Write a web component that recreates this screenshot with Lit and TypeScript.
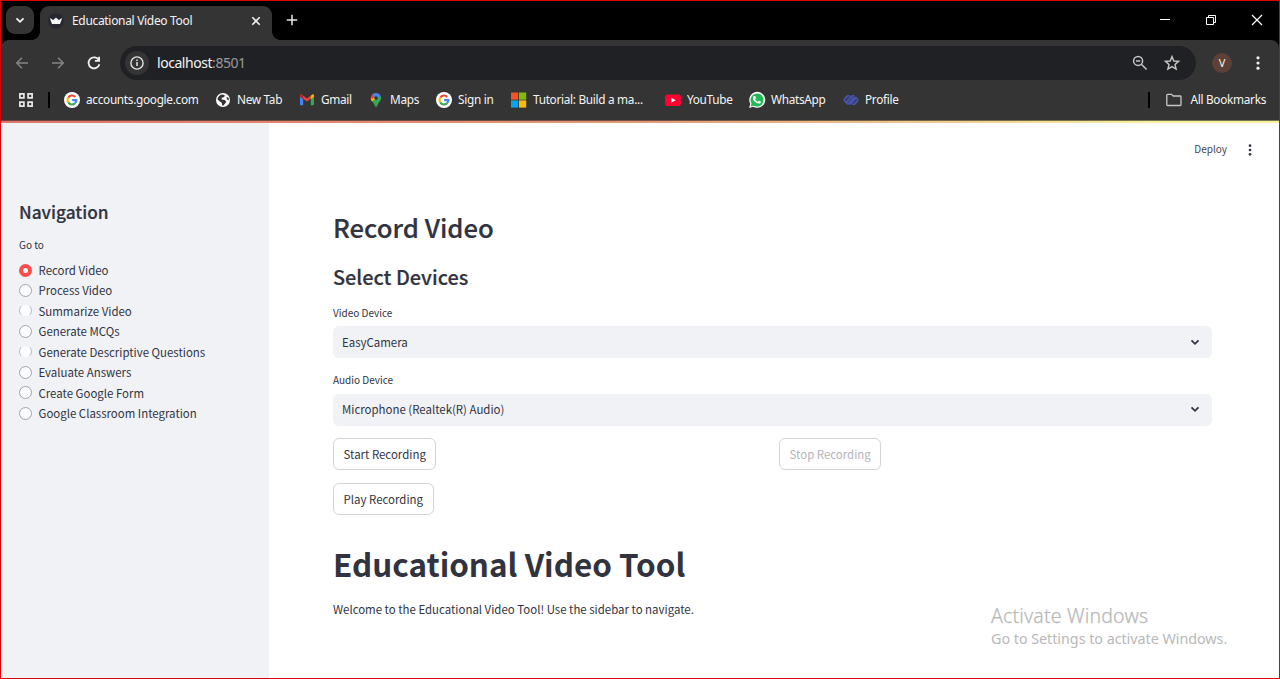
import { LitElement, html, css, svg } from "lit";
import { customElement, property, state } from "lit/decorators.js";
import { classMap } from "lit/directives/class-map.js";

const icons: Record<string, unknown> = {
  google: svg`<circle cx="8" cy="8" r="8" fill="#fff"/><g fill="none" stroke-width="2.1"><path d="M4.300 5.600A4.400 4.400 0 0 1 11.200 4.900" stroke="#ea4335"/><path d="M4.300 5.600a4.400 4.400 0 0 0 0 4.800" stroke="#fbbc05"/><path d="M4.300 10.400a4.400 4.400 0 0 0 6.600 1" stroke="#34a853"/><path d="M10.900 11.400A4.400 4.400 0 0 0 12.400 8.100H8.200" stroke="#4285f4"/></g>`,
  globe: svg`<circle cx="8" cy="8" r="7" fill="#fff"/><path d="M7 2.4 9.7 3l-.4 2-2.5.8-.3 1.8 3.2.4 1.6 1.7-1.2 1.8-1.9 2.2-1.1-.4-.3-2.6-2.7-1.6L2.5 7.2A5.8 5.8 0 0 1 7 2.4zM11.5 4.8l2.2 1.3.1 2.5-1.8-1z" fill="#343434"/>`,
  gmail: svg`<path d="M1 4.2v8.3c0 .4.3.7.7.7h2.5V7z" fill="#4285f4"/><path d="M11.8 7v6.2h2.5c.4 0 .7-.3.7-.7V4.2z" fill="#34a853"/><path d="M1 4.2 8 9.4l7-5.2V3.6c0-1-1.2-1.5-2-.9L8 6.5 3 2.7c-.8-.6-2-.1-2 .9z" fill="#ea4335"/><path d="M11.8 4v3.2L15 4.8V3.7c0-1.2-1.2-1.6-2-1z" fill="#fbbc04"/><path d="M1 3.7v1.1l3.2 2.4V4L3 2.7c-.8-.6-2-.2-2 1z" fill="#c5221f"/>`,
  maps: svg`<path d="M8 1a5.2 5.2 0 0 0-4 1.9L6.5 5z" fill="#ea4335"/><path d="M4 2.9A5.2 5.2 0 0 0 3.4 8.6L9.8 5z" fill="#ea4335"/><path d="M8 1a5.2 5.2 0 0 1 4.7 3L8 8.5 4 2.9A5.2 5.2 0 0 1 8 1z" fill="#4285f4"/><path d="M2.8 6.2A5.2 5.2 0 0 0 4 9.6L8.9 7 6.2 5z" fill="#fbbc04"/><path d="M12.7 4c1.2 3-.6 5-2.2 7.1-.9 1.2-1.3 3.9-2.5 3.9s-1.2-2-2-3.2L4 9.4z" fill="#34a853"/><path d="M2.9 4.7 4.1 2.9 6.2 4.8 4 7.4z" fill="#ea4335"/><circle cx="8" cy="6.1" r="1.8" fill="#30343a"/>`,
  microsoft: svg`<path d="M0 .5h7.2v7.2H0z" fill="#f35325"/><path d="M8 .5h7.2v7.2H8z" fill="#81bc06"/><path d="M0 8.4h7.2v7.2H0z" fill="#05a6f0"/><path d="M8 8.4h7.2v7.2H8z" fill="#ffba08"/>`,
  youtube: svg`<rect x="0" y="2.5" width="16" height="11.5" rx="2.8" fill="#f03"/><path d="m6.4 5.7 4.2 2.5-4.2 2.5z" fill="#fff"/>`,
  whatsapp: svg`<path d="m.1 16 1.2-4.2A8 8 0 1 1 4.3 14.8z" fill="#fff"/><path d="m1.7 14.4.8-2.9a6.5 6.5 0 1 1 2.3 2.2z" fill="#20b954"/><path d="M5.2 4.1h1l.8 2-.8 1.1c.7 1.3 1.5 2 2.8 2.6l1-1.1 2 1c-.1 1.5-1.4 2.2-2.6 1.9-3-.8-5.4-3.1-5.5-5.4 0-.9.5-1.8 1.3-2.1z" fill="#fff"/>`,
  profile: svg`<path d="M4.500 3.500h7L15 8l-3.500 4.500h-7L1 8z" fill="#3a4078"/><g fill="none" stroke="#4f5bb8" stroke-width="1.15" stroke-linejoin="round" stroke-linecap="round"><path d="M3.200 10.800 1.200 8.800Q.6 8 1.200 7.200L4 4Q5 3 6.200 3.900M12.800 5.200 14.800 7.200Q15.400 8 14.800 8.800L12 12Q11 13 9.800 12.100M3.200 10.800 8.600 4.200Q9.600 3.200 10.700 4M5.200 12.200 10.700 5.800M7.400 12.100 12.800 5.400M3.200 10.800Q4.200 12.500 5.200 12.200"/></g>`,
  folder: svg`<path d="M.8 3.2c0-.5.3-.8.8-.8h4L7.200 4h7c.5 0 .8.3.8.8v7.900c0 .5-.3.800-.8.800H1.600c-.5 0-.8-.3-.8-.8z" fill="none" stroke="#c7c7c7" stroke-width="1.3"/>`,
  apps: svg`<g fill="none" stroke="#e8e8e8" stroke-width="1.7"><path d="M1.900 1.900h4v4h-4zM10.100 1.900h4v4h-4zM1.900 10.100h4v4h-4zM10.100 10.100h4v4h-4z"/></g>`,
  back: svg`<path d="M14 8H3M8 2.7 2.7 8 8 13.3" fill="none" stroke="#858585" stroke-width="1.5"/>`,
  forward: svg`<path d="M2 8h11M8 2.7 13.3 8 8 13.3" fill="none" stroke="#858585" stroke-width="1.5"/>`,
  reload: svg`<path d="M12.9 5.2A5.5 5.5 0 1 0 13.4 9.2" fill="none" stroke="#f0f0f0" stroke-width="1.8"/><path d="M14 1.7v5.1H8.9V5.1h3.3V1.7z" fill="#f0f0f0"/>`,
  info: svg`<circle cx="8" cy="8" r="6.1" fill="none" stroke="#e3e3e3" stroke-width="1.4"/><path d="M8 7.1v4M8 4.6v1.5" stroke="#e3e3e3" stroke-width="1.5"/>`,
  zoom: svg`<g fill="none" stroke="#c7c7c7" stroke-width="1.5"><circle cx="6.1" cy="5.900" r="4.5"/><path d="m9.300 9.200 5.300 5.300M4 5.900h4.200"/></g>`,
  star: svg`<path d="m8 1.600 1.800 4.400 4.800.4-3.600 3.100 1.100 4.600L8 11.600l-4.100 2.500L5 9.500 1.400 6.400 6.200 6z" fill="none" stroke="#c7c7c7" stroke-width="1.4"/>`,
  dots: svg`<g fill="#f0f0f0"><circle cx="8" cy="2.8" r="1.6"/><circle cx="8" cy="8" r="1.6"/><circle cx="8" cy="13.2" r="1.6"/></g>`,
  menu: svg`<g fill="#31333f"><circle cx="8" cy="3.7" r="1.35"/><circle cx="8" cy="8" r="1.35"/><circle cx="8" cy="12.3" r="1.35"/></g>`,
  chevron: svg`<path d="m4.500 6.300 3.500 3.500 3.500-3.500" fill="none" stroke="currentColor" stroke-width="1.8"/>`,
  close: svg`<path d="m4.300 4.300 7.400 7.400M11.700 4.300l-7.400 7.400" stroke="#f0f0f0" stroke-width="1.6"/>`,
  plus: svg`<path d="M8 2.800v10.400M2.800 8h10.400" stroke="#e8e8e8" stroke-width="1.5"/>`,
  crown: svg`<circle cx="8" cy="8" r="7.8" fill="#262730"/><path d="m1.800 5 3.500 2L8 4.600 10.700 7l3.500-2-2.200 6H4z" fill="#f3f3f6"/>`,
  minimize: svg`<path d="M3 7.500h10" stroke="#fff"/>`,
  restore: svg`<path d="M3.500 5.500h7v7h-7zM5.500 5.500v-2h7v7h-2" fill="none" stroke="#fff"/>`,
  exit: svg`<path d="m3 3 10 10M13 3 3 13" stroke="#fff" stroke-width="1.2"/>`,
};

@customElement("ui-icon")
class UiIcon extends LitElement {
  @property() name = "";
  static styles = css`
    :host { display: block; width: 16px; height: 16px; flex: none; }
    svg { display: block; width: 100%; height: 100%; overflow: visible; }
  `;
  render() {
    return html`<svg viewBox="0 0 16 16">${icons[this.name]}</svg>`;
  }
}

@customElement("browser-chrome")
class BrowserChrome extends LitElement {
  static styles = css`
    :host { display: block; height: 121px; background: #000; color: #f4f4f4; font: 12px/16px "Noto Sans", sans-serif; }
    * { box-sizing: border-box; }
    .row, .tab, .omnibox, .mark { display: flex; align-items: center; white-space: nowrap; }
    .row.tabs { height: 40px; align-items: flex-start; padding: 6px 0 0 6px; }
    .search { width: 28px; height: 28px; border-radius: 9px; background: #343434; display: grid; place-items: center; }
    .tab { position: relative; width: 232px; height: 34px; margin-left: 6px; padding: 0 8px 5px; background: #343434; border-radius: 9px 9px 0 0; }
    .tab::before, .tab::after { content: ""; position: absolute; bottom: 0; width: 8px; height: 8px; }
    .tab::before { left: -8px; background: radial-gradient(circle at 0 0, #000 7.5px, #343434 8px); }
    .tab::after { right: -8px; background: radial-gradient(circle at 100% 0, #000 7.5px, #343434 8px); }
    .title { margin-left: 8px; flex: 1; letter-spacing: -0.32px; }
    .plus { margin: 6px 0 0 12px; }
    .controls { display: flex; gap: 30px; margin: 6px 15px 0 auto; }
    .toolbar { height: 44px; padding: 2px 13px 0; background: #343434; border-radius: 8px 8px 0 0; margin: 0 1px; }
    .nav { display: flex; gap: 20px; }
    .omnibox { flex: none; width: 1076px; height: 34px; margin-left: 18px; border-radius: 17px; background: #202124; padding: 0 16px 0 5px; font-size: 14px; letter-spacing: -0.45px; }
    .site { width: 24px; height: 24px; border-radius: 50%; background: #343434; display: grid; place-items: center; margin-right: 8px; }
    .port { color: #9a9a9a; flex: 1; }
    .tools { display: flex; gap: 16px; }
    .avatar { width: 20px; height: 20px; margin: 0 18px 0 16px; border-radius: 50%; background: #5d4037; text-align: center; font: 11px/20px "Noto Sans", sans-serif; }
    .marks { height: 37px; background: #343434; padding: 0 14px 5px 18px; font-size: 11.8px; letter-spacing: -0.3px; }
    .sep { width: 2px; height: 16px; background: #000; margin: 0 14px; }
    .list { display: grid; grid-template-columns: 151px 84px 69px 68px 75px 154px 84px 94px 60px; }
    .mark { gap: 6px; }
    .mark span { padding-bottom: 2px; line-height: 14px; }
    .sep.all { margin: 0 16px 0 auto; }
    .folder { gap: 8px; }
  `;
  bookmarks = [
    ["google", "accounts.google.com"], ["globe", "New Tab"], ["gmail", "Gmail"],
    ["maps", "Maps"], ["google", "Sign in"], ["microsoft", "Tutorial: Build a ma..."],
    ["youtube", "YouTube"], ["whatsapp", "WhatsApp"], ["profile", "Profile"],
  ];
  render() {
    return html`
      <div class="row tabs">
        <div class="search"><ui-icon name="chevron"></ui-icon></div>
        <div class="tab"><ui-icon name="crown"></ui-icon><span class="title">Educational Video Tool</span><ui-icon name="close"></ui-icon></div>
        <ui-icon class="plus" name="plus"></ui-icon>
        <div class="controls"><ui-icon name="minimize"></ui-icon><ui-icon name="restore"></ui-icon><ui-icon name="exit"></ui-icon></div>
      </div>
      <div class="row toolbar">
        <div class="nav"><ui-icon name="back"></ui-icon><ui-icon name="forward"></ui-icon><ui-icon name="reload"></ui-icon></div>
        <div class="omnibox">
          <div class="site"><ui-icon name="info"></ui-icon></div><span>localhost</span><span class="port">:8501</span>
          <div class="tools"><ui-icon name="zoom"></ui-icon><ui-icon name="star"></ui-icon></div>
        </div>
        <div class="avatar">V</div><ui-icon name="dots"></ui-icon>
      </div>
      <div class="row marks">
        <ui-icon name="apps"></ui-icon><i class="sep"></i>
        <div class="list">${this.bookmarks.map(([icon, label]) => html`<div class="mark"><ui-icon name=${icon}></ui-icon><span>${label}</span></div>`)}</div>
        <i class="sep all"></i><div class="mark folder"><ui-icon name="folder"></ui-icon><span>All Bookmarks</span></div>
      </div>`;
  }
}

@customElement("nav-sidebar")
class NavSidebar extends LitElement {
  @state() selected = 0;
  static styles = css`
    :host { display: block; box-sizing: border-box; flex: none; width: 269px; background: #f0f2f6; padding: 79px 19px 0; }
    h2 { margin: 0; font-size: 17.3px; font-weight: 500; line-height: 20px; -webkit-text-stroke: 0.2px; }
    .caption { margin-top: 15px; font-size: 10px; line-height: 16px; }
    .options { margin-top: 6.8px; }
    .option { display: flex; align-items: center; gap: 6.5px; height: 20.45px; }
    .radio { box-sizing: border-box; width: 13px; height: 13px; border-radius: 50%; border: 1px solid #a3a5ad; background: #fbfcfd; }
    .faint { border-color: #f0f2f6 #b9bbc2; }
    .on { border: 4px solid #ff4b4b; background: #fff; }
  `;
  pages = ["Record Video", "Process Video", "Summarize Video", "Generate MCQs", "Generate Descriptive Questions", "Evaluate Answers", "Create Google Form", "Google Classroom Integration"];
  render() {
    return html`<h2>Navigation</h2>
      <div class="caption">Go to</div>
      <div class="options">${this.pages.map((page, i) => html`
        <div class="option" @click=${() => (this.selected = i)}>
          <span class=${classMap({ radio: true, on: i === this.selected, faint: i === 2 || i === 4 })}></span><span>${page}</span>
        </div>`)}</div>`;
  }
}

@customElement("select-field")
class SelectField extends LitElement {
  @property() label = "";
  @property() value = "";
  static styles = css`
    :host { display: block; }
    .label { font-size: 10px; line-height: 16px; }
    .box { box-sizing: border-box; display: flex; align-items: center; justify-content: space-between; height: 32px; margin-top: var(--label-gap, 5px); padding: 0 9px var(--lift, 0); border-radius: 6px; background: #f0f2f6; }
  `;
  render() {
    return html`<div class="label">${this.label}</div><div class="box"><span>${this.value}</span><ui-icon name="chevron"></ui-icon></div>`;
  }
}

@customElement("app-root")
class AppRoot extends LitElement {
  static styles = css`
    :host { display: block; position: relative; width: 1280px; height: 679px; overflow: hidden; background: #fff; color: #31333f; font: 11.45px/20px "Noto Sans CJK SC", sans-serif; }
    * { box-sizing: border-box; }
    .frame { position: absolute; inset: 0; border: 1px solid #e00008; pointer-events: none; }
    .deco { height: 3px; margin-top: -1px; position: relative; background: linear-gradient(#2229 1px, #0000 1px), linear-gradient(90deg, #e0766a, #e39877 50%, #f6f09c 90%); }
    .body { display: flex; height: 556px; }
    .page { position: relative; flex: 1; padding: 88px 68px 0 64px; }
    .actions { position: absolute; top: 18px; right: 22px; display: flex; align-items: center; gap: 15px; font-size: 10px; line-height: 15px; color: #444654; }
    .actions span { padding-bottom: 2px; }
    h1, h2, h3, p { margin: 0; }
    h2 { font-size: 25.7px; line-height: 32px; font-weight: 500; -webkit-text-stroke: 0.2px; }
    h3 { margin-top: 19px; font-size: 19.9px; line-height: 30px; font-weight: 500; -webkit-text-stroke: 0.2px; }
    .video { margin-top: 13px; }
    .audio { margin-top: 14px; --label-gap: 6px; --lift: 2px; }
    .buttons { display: grid; grid-template-columns: 446px 1fr; justify-items: start; row-gap: 13px; margin-top: 12px; }
    button { height: 32px; padding: 0 9.6px; border: 1px solid #d3d4d8; border-radius: 6px; background: #fff; color: inherit; font: inherit; }
    button:disabled { color: #b3b4ba; }
    h1 { margin-top: 29px; font-size: 31.45px; line-height: 40px; font-weight: 700; }
    p { margin-top: 15px; }
    .watermark { position: absolute; left: 991px; top: 603px; color: #b9b9b9; font-family: "Noto Sans", sans-serif; white-space: nowrap; }
    .big { font-size: 19.5px; line-height: 26px; font-weight: 300; letter-spacing: 0.18px; -webkit-text-stroke: 0.25px; }
    .small { font-size: 14.400px; line-height: 20px; letter-spacing: -0.06px; }
  `;
  render() {
    return html`<browser-chrome></browser-chrome>
      <div class="deco"></div>
      <div class="body">
        <nav-sidebar></nav-sidebar>
        <div class="page">
          <div class="actions"><span>Deploy</span><ui-icon name="menu"></ui-icon></div>
          <h2>Record Video</h2>
          <h3>Select Devices</h3>
          <select-field class="video" label="Video Device" value="EasyCamera"></select-field>
          <select-field class="audio" label="Audio Device" value="Microphone (Realtek(R) Audio)"></select-field>
          <div class="buttons"><button>Start Recording</button><button disabled>Stop Recording</button><button>Play Recording</button></div>
          <h1>Educational Video Tool</h1>
          <p>Welcome to the Educational Video Tool! Use the sidebar to navigate.</p>
        </div>
      </div>
      <div class="watermark"><div class="big">Activate Windows</div><div class="small">Go to Settings to activate Windows.</div></div>
      <div class="frame"></div>`;
  }
}
